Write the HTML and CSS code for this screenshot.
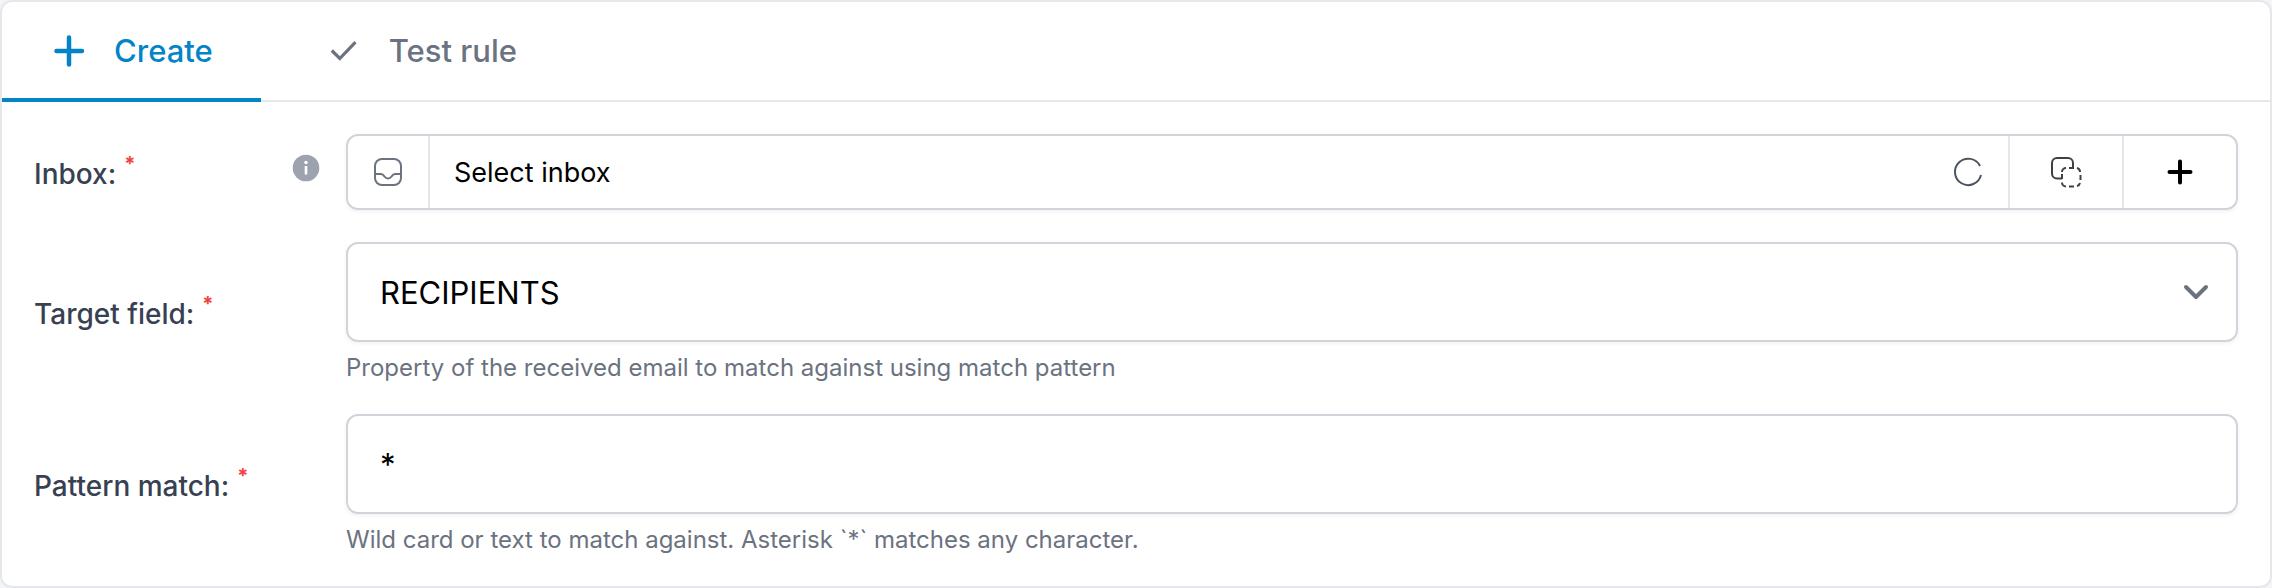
FILE: index.html
```html
<!DOCTYPE html>
<html lang="en">

<head>
	<meta charset="UTF-8">
	<meta name="viewport" content="width=device-width, initial-scale=1.0">
	<title>Create rule</title>
	<link rel="stylesheet" href="styles.css">
</head>

<body>

	<main class="card">
		<nav class="tabs">
			<button type="button" class="tab tab-active">
				<svg class="tab-icon" viewBox="0 0 36 36" aria-hidden="true">
					<path d="M19 5.500v27M6.500 19h25.500" stroke-width="4.500" stroke-linecap="round" />
				</svg>
				Create
			</button>
			<button type="button" class="tab">
				<svg class="tab-icon" viewBox="0 0 36 36" aria-hidden="true">
					<path d="M6.800 18.500l8 8L30.500 10.200" stroke-width="3.200" />
				</svg>
				Test rule
			</button>
		</nav>

		<form class="form">
			<div class="row row-inbox">
				<div class="label-cell">
					<label class="label" for="inbox">Inbox:<span class="required">*</span></label>
					<svg class="info" viewBox="0 0 28 28" role="img" aria-label="Info">
						<circle cx="14" cy="14" r="13.300" fill="#9ca3af" />
						<path d="M14 12v8.500" stroke="#fff" stroke-width="2.600" />
						<circle cx="14" cy="8.500" r="1.700" fill="#fff" />
					</svg>
				</div>
				<div class="input-group">
					<span class="addon">
						<svg class="icon" viewBox="0 0 32 32" aria-hidden="true">
							<rect x="3" y="3" width="26" height="26" rx="7" />
							<path d="M3 18h6c2 0 2.500 1 3.500 2.500S14.500 22.500 16 22.500s2.500-.500 3.500-2S21 18 23 18h6" />
						</svg>
					</span>
					<select class="inbox-select" id="inbox">
						<option>Select inbox</option>
					</select>
					<svg class="icon spinner" viewBox="0 0 32 32" aria-hidden="true">
						<path d="M28 10A13.200 13.200 0 1 0 29 19" />
					</svg>
					<button type="button" class="group-button" aria-label="Copy">
						<svg class="icon icon-dark" viewBox="0 0 32 32" aria-hidden="true">
							<path d="M12 22.500H7A5 5 0 0 1 2 17.500V7a5 5 0 0 1 5-5h11a5 5 0 0 1 5 5v5" />
							<path d="M12 16a4 4 0 0 1 4-4M19 12h5M27 12a4 4 0 0 1 3 4M30.500 19v5M30 27a4 4 0 0 1-3 3M24 30.500h-5M16 30.500a4 4 0 0 1-4-4M12 23v-5" />
						</svg>
					</button>
					<button type="button" class="group-button" aria-label="Add inbox">
						<svg class="icon icon-plus" viewBox="0 0 32 32" aria-hidden="true">
							<path d="M16 5.500v21M5.500 16h21" />
						</svg>
					</button>
				</div>
			</div>

			<div class="row">
				<div class="label-cell">
					<label class="label" for="target">Target field:<span class="required">*</span></label>
				</div>
				<div class="field">
					<div class="select-wrap">
						<select class="control" id="target">
							<option>RECIPIENTS</option>
						</select>
						<svg class="chevron" viewBox="0 0 32 32" aria-hidden="true">
							<path d="M6 11l10 10 10-10" />
						</svg>
					</div>
					<p class="help">Property of the received email to match against using match pattern</p>
				</div>
			</div>

			<div class="row">
				<div class="label-cell">
					<label class="label" for="pattern">Pattern match:<span class="required">*</span></label>
				</div>
				<div class="field">
					<input class="control" id="pattern" type="text" value="*">
					<p class="help">Wild card or text to match against. Asterisk `*` matches any character.</p>
				</div>
			</div>
		</form>
	</main>

</body>

</html>
```
FILE: styles.css
```css
* {
	box-sizing: border-box;
}

body {
	margin: 0;
	background-color: #f3f4f6;
	font-family: Inter, 'Liberation Sans', sans-serif;
}

button,
select,
input {
	font-family: inherit;
	margin: 0;
}

svg {
	fill: none;
	stroke: currentColor;
	flex-shrink: 0;
}

.card {
	min-height: 100vh;
	background-color: #fff;
	border: 2px solid #e5e7eb;
	border-radius: 12px;
}

.tabs {
	display: flex;
	gap: 16px;
	box-shadow: inset 0 -2px #e5e7eb;
}

.tab {
	display: flex;
	align-items: center;
	gap: 28px;
	height: 100px;
	padding: 0 48px;
	background: none;
	border: none;
	border-bottom: 4px solid transparent;
	color: #6b7280;
	font-size: 31px;
	font-weight: 500;
}

.tab-active {
	color: #0284c7;
	border-bottom-color: #0284c7;
}

.tab-icon {
	width: 36px;
	height: 36px;
}

.form {
	display: flex;
	flex-direction: column;
	gap: 28px;
	padding: 32px 32px 24px;
}

.row {
	display: grid;
	grid-template-columns: 312px 1fr;
	align-items: center;
}

.row-inbox {
	min-height: 80px;
}

.label-cell {
	display: flex;
	align-items: center;
	justify-content: space-between;
	padding-right: 26px;
}

.label {
	color: #374151;
	font-size: 28px;
	font-weight: 500;
	line-height: 40px;
}

.required {
	margin-left: 8px;
	color: #ef4444;
	font-size: 20px;
	font-weight: 700;
	line-height: 0;
	vertical-align: 13px;
}

.info {
	width: 28px;
	height: 28px;
	margin-bottom: 12px;
	stroke: none;
}

.input-group,
.control {
	width: 100%;
	background-color: #fff;
	border: 2px solid #d1d5db;
	border-radius: 12px;
	box-shadow: 0 2px 4px rgba(0, 0, 0, 0.05);
}

.input-group {
	display: flex;
	align-items: center;
	align-self: start;
	height: 76px;
}

.addon {
	display: flex;
	align-items: center;
	justify-content: center;
	width: 82px;
	height: 100%;
	border-right: 2px solid #e5e7eb;
	color: #6b7280;
}

.inbox-select {
	flex: 1;
	height: 100%;
	padding: 0 24px;
	background: none;
	border: none;
	appearance: none;
	color: #000;
	font-size: 27px;
}

.icon {
	width: 32px;
	height: 32px;
	stroke-width: 2;
}

.spinner {
	margin-right: 24px;
	color: #4b5563;
}

.group-button {
	display: flex;
	align-items: center;
	justify-content: center;
	width: 114px;
	height: 100%;
	padding: 0;
	background: none;
	border: none;
	border-left: 2px solid #e5e7eb;
	color: #000;
}

.icon-dark {
	color: #404040;
}

.icon-plus {
	stroke-width: 4;
	stroke-linecap: round;
}

.control {
	height: 100px;
	padding: 0 32px;
	appearance: none;
	color: #000;
	font-size: 31px;
}

.select-wrap {
	display: grid;
	align-items: center;
}

.select-wrap .control,
.chevron {
	grid-area: 1 / 1;
}

.chevron {
	justify-self: end;
	width: 32px;
	height: 32px;
	margin-right: 26px;
	color: #6b7280;
	stroke-width: 4;
	stroke-linecap: round;
	stroke-linejoin: round;
	pointer-events: none;
}

.help {
	margin: 8px 0 0;
	color: #6b7280;
	font-size: 24px;
	line-height: 36px;
}
```
